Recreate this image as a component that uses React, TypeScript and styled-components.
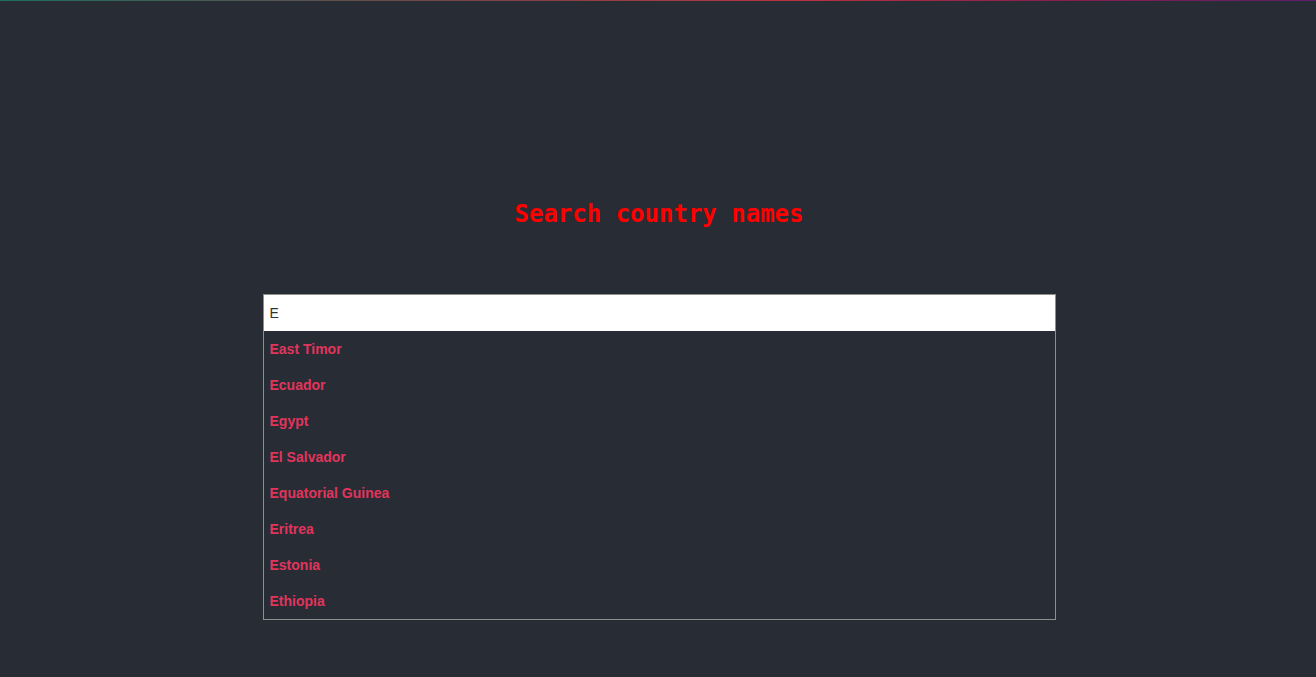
import styled, { createGlobalStyle } from "styled-components";
import { useState } from "react";

const COUNTRIES = [
  "Afghanistan", "Albania", "Algeria", "Denmark", "Djibouti", "Dominica",
  "East Timor", "Ecuador", "Egypt", "El Salvador", "Equatorial Guinea",
  "Eritrea", "Estonia", "Ethiopia", "Fiji", "Finland", "France",
];

const GlobalStyle = createGlobalStyle`
  html, body {
    margin: 0;
    padding: 0;
    background-color: #282c34;
  }
  body {
    font-family: "Liberation Sans", Arial, sans-serif;
  }
`;

export default function App() {
  const [query, setQuery] = useState("E");

  const matches = query
    ? COUNTRIES.filter((c) => c.toLowerCase().startsWith(query.toLowerCase()))
    : [];

  return <Page>
    <GlobalStyle />
    <TopLine />
    <Title>Search country names</Title>
    <Search>
      <Input autoFocus value={query} onChange={(e) => setQuery(e.target.value)} />
      {matches.length > 0 && <List>
        {matches.map((name) => <Item key={name}>{name}</Item>)}
      </List>}
    </Search>
  </Page>
}

const Page = styled.div`
  min-height: 677px;
  display: flex;
  flex-direction: column;
  align-items: center;
`;

const TopLine = styled.div`
  align-self: stretch;
  height: 1px;
  background: linear-gradient(90deg, #1f6f5f 0%, #6a4a4a 30%, #b8333f 60%, #8a1e4e 80%, #5a1f6a 100%);
`;

const Title = styled.h1`
  margin: 184px 0 0 2px;
  font-family: "DejaVu Sans Mono", "Liberation Mono", monospace;
  font-size: 24px;
  font-weight: bold;
  color: #ff0000;
  line-height: 58px;
`;

const Search = styled.div`
  width: 793px;
  margin-top: 51px;
  margin-left: 2px;
  border: 1px solid #8e8e8e;
  box-sizing: border-box;
`;

const Input = styled.input`
  display: block;
  width: 100%;
  height: 36px;
  box-sizing: border-box;
  border: none;
  outline: none;
  padding: 0 6px;
  font-family: "Liberation Sans", Arial, sans-serif;
  font-size: 14px;
  color: #333;
  background: #ffffff;
`;

const List = styled.ul`
  list-style: none;
  margin: 0;
  padding: 0;
`;

const Item = styled.li`
  height: 36px;
  line-height: 36px;
  padding: 0 6px;
  font-size: 14px;
  font-weight: bold;
  color: #e0355d;
  cursor: pointer;
`;
